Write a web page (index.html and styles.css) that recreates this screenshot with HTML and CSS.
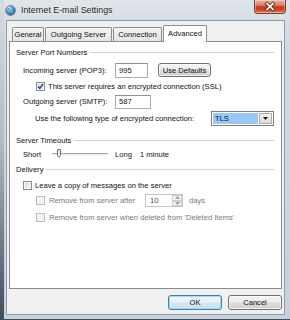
FILE: index.html
```html
<!DOCTYPE html>
<html lang="en">
<head>
<meta charset="utf-8">
<title>Internet E-mail Settings</title>
<link rel="stylesheet" href="styles.css">
</head>
<body>
<div class="window">
  <div class="titlebar">
    <svg class="appicon" width="11" height="11" viewBox="0 0 11 11">
      <defs>
        <radialGradient id="globe" cx="0.35" cy="0.3" r="0.8">
          <stop offset="0" stop-color="#e2f2ff"/>
          <stop offset="0.45" stop-color="#4f9ee0"/>
          <stop offset="1" stop-color="#1a4f8f"/>
        </radialGradient>
      </defs>
      <circle cx="5.5" cy="5.5" r="4.9" fill="url(#globe)" stroke="#6a7888" stroke-width="0.8"/>
      <path d="M2.4 3.6 q1.4 -1.2 2.6 -0.2 q0.4 1.2 -0.9 1.8 q-0.6 1 -1.6 0.3 z" fill="#63b34c"/>
      <path d="M6.4 6.1 q1.5 -0.4 2.3 0.7 q-0.4 1.6 -1.7 1.9 q-0.8 -1.2 -0.6 -2.6 z" fill="#63b34c"/>
    </svg>
    <span class="title">Internet E-mail Settings</span>
    <div class="close">
      <svg width="30" height="13" viewBox="0 0 30 13">
        <path d="M12 3.6 L18 9.4 M18 3.6 L12 9.4" stroke="#5a1e12" stroke-width="3.4" stroke-linecap="square"/>
        <path d="M12 3.6 L18 9.4 M18 3.6 L12 9.4" stroke="#ffffff" stroke-width="1.8" stroke-linecap="square"/>
      </svg>
    </div>
  </div>

  <div class="client">
    <div class="tabs">
      <div class="tab t-general">General</div>
      <div class="tab t-outgoing">Outgoing Server</div>
      <div class="tab t-connection">Connection</div>
      <div class="tab t-advanced active">Advanced</div>
    </div>

    <div class="panel">
      <div class="group g-ports"><span>Server Port Numbers</span></div>

      <div class="row r-incoming">
        <span class="lbl-port">Incoming server (POP3):</span>
        <div class="field f-in">995</div>
        <div class="btn btn-defaults">Use Defaults</div>
      </div>

      <div class="row r-ssl">
        <span class="check checked">
          <svg width="7" height="7" viewBox="0 0 7 7"><path d="M1 3.4 L2.8 5.4 L6 1" fill="none" stroke="#2d4a8a" stroke-width="1.5"/></svg>
        </span>
        <span class="ctext">This server requires an encrypted connection (SSL)</span>
      </div>

      <div class="row r-outgoing">
        <span class="lbl-port">Outgoing server (SMTP):</span>
        <div class="field f-out">587</div>
      </div>

      <div class="row r-enc">
        <span>Use the following type of encrypted connection:</span>
        <div class="select">
          <span class="sel-value">TLS</span>
          <span class="sel-btn">
            <svg width="5" height="3" viewBox="0 0 5 3"><path d="M0 0 H5 L2.5 3 Z" fill="#111"/></svg>
          </span>
        </div>
      </div>

      <div class="group g-timeouts"><span>Server Timeouts</span></div>

      <div class="row r-short">
        <span class="lbl-short">Short</span>
        <svg class="slider" width="65" height="12" viewBox="0 0 65 12">
          <line x1="2" y1="5.5" x2="58" y2="5.5" stroke="#a9a9a9" stroke-width="1"/>
          <line x1="2" y1="6.5" x2="58" y2="6.5" stroke="#e8e8e8" stroke-width="1"/>
          <path d="M7.5 1.5 H10.5 V7.5 L9 9.5 L7.5 7.5 Z" fill="#eeeeee" stroke="#707070" stroke-width="1"/>
        </svg>
        <span>Long</span>
        <span class="minute">1 minute</span>
      </div>

      <div class="group g-delivery"><span>Delivery</span></div>

      <div class="row r-leave">
        <span class="check"></span>
        <span class="ctext">Leave a copy of messages on the server</span>
      </div>

      <div class="row r-after">
        <span class="check disabled"></span>
        <span class="ctext dis lbl-after">Remove from server after</span>
        <div class="spin">
          <span class="spin-val">10</span>
          <span class="spin-btns">
            <span class="spin-b"><svg width="5" height="3" viewBox="0 0 5 3"><path d="M0 3 H5 L2.5 0 Z" fill="#a0a0a0"/></svg></span>
            <span class="spin-b"><svg width="5" height="3" viewBox="0 0 5 3"><path d="M0 0 H5 L2.5 3 Z" fill="#a0a0a0"/></svg></span>
          </span>
        </div>
        <span class="dis days">days</span>
      </div>

      <div class="row r-deleted">
        <span class="check disabled"></span>
        <span class="ctext dis">Remove from server when deleted from 'Deleted Items'</span>
      </div>
    </div>

    <div class="buttons">
      <div class="btn btn-dlg btn-ok">OK</div>
      <div class="btn btn-dlg">Cancel</div>
    </div>
  </div>
</div>
</body>
</html>
```

FILE: styles.css
```css
* { box-sizing: border-box; }

html, body {
  margin: 0;
  padding: 0;
}

body {
  width: 290px;
  height: 320px;
  overflow: hidden;
  font-family: "Liberation Sans", Arial, sans-serif;
  font-size: 7.6px;
  color: #111;
  background: #c9d1da;
}

.window {
  width: 290px;
  height: 320px;
  display: flex;
  flex-direction: column;
  background: linear-gradient(to bottom, #e0e5ea 0, #d4dae1 30px, #c8d0d9 100%);
  border-left: 4px solid #8895a3;
  border-image: linear-gradient(to bottom, #d6dce2 0, #b0bac5 45%, #3e4c5c 100%) 1;
  border-bottom: 1px solid #6d7d8e;
}

/* title bar */
.titlebar {
  height: 20px;
  flex: none;
  display: flex;
  align-items: flex-start;
}

.appicon {
  margin: 5px 0 0 1px;
  flex: none;
}

.title {
  margin: 5px 0 0 5px;
  line-height: 11px;
  font-size: 8.8px;
  color: #1b1b1b;
  text-shadow: 0 0 3px rgba(255,255,255,0.9);
}

.close {
  margin-left: auto;
  margin-right: 4px;
  width: 32px;
  height: 14px;
  border: 1px solid #7d3b2e;
  border-top: none;
  border-radius: 0 0 4px 4px;
  background: linear-gradient(to bottom, #eab2a5 0, #dc8068 40%, #c43a1d 52%, #c9492b 78%, #e08a69 100%);
  box-shadow: inset 0 0 0 1px rgba(255,255,255,0.35);
  display: flex;
  align-items: center;
  justify-content: center;
}

/* client area */
.client {
  flex: 1;
  margin: 0 5px 4px 2px;
  background: #f0f0f0;
  border: 1px solid #8f9cab;
  padding: 4px 2px 0 2px;
  display: flex;
  flex-direction: column;
}

.tabs {
  height: 16px;
  flex: none;
  display: flex;
  align-items: flex-end;
  gap: 1px;
  padding-left: 3px;
}

.tab {
  height: 14px;
  border: 1px solid #898c95;
  border-bottom: none;
  border-radius: 2px 2px 0 0;
  background: linear-gradient(to bottom, #f4f4f4, #e4e4e4);
  display: flex;
  align-items: center;
  justify-content: center;
  white-space: nowrap;
}

.tab.active {
  height: 17px;
  margin-bottom: -1px;
  background: #ffffff;
  position: relative;
  z-index: 1;
  padding-bottom: 2px;
}

.t-general { width: 32px; }
.t-outgoing { width: 67px; }
.t-connection { width: 49px; }
.t-advanced { width: 44px; }

.panel {
  height: 248px;
  flex: none;
  background: #ffffff;
  border: 1px solid #898c95;
  padding: 4px 7px 0 6px;
  display: flex;
  flex-direction: column;
}

/* group headers */
.group {
  height: 12px;
  display: flex;
  align-items: center;
  white-space: nowrap;
}

.group::after {
  content: "";
  flex: 1;
  margin-left: 3px;
  border-top: 1px solid #d2d2d2;
}

.g-timeouts { margin-top: 8px; }
.g-delivery { margin-top: 3px; }

/* rows */
.row {
  display: flex;
  align-items: center;
  white-space: nowrap;
}

.r-incoming { height: 16px; margin-top: 4px; margin-left: 7px; }
.r-ssl { height: 14px; margin-top: 1px; margin-left: 20px; }
.r-outgoing { height: 15px; margin-top: 1px; margin-left: 7px; }
.r-enc { height: 15px; margin-top: 2px; margin-left: 19px; }
.r-short { height: 12px; margin-top: 2px; margin-left: 7px; }
.r-leave { height: 12px; margin-top: 4px; margin-left: 7px; }
.r-after { height: 13px; margin-top: 3px; margin-left: 20px; }
.r-deleted { height: 12px; margin-top: 4px; margin-left: 20px; }

.lbl-port { width: 92px; flex: none; }

.field {
  background: #fff;
  border: 1px solid #abadb3;
  border-top-color: #8e9097;
  padding-left: 3px;
  display: flex;
  align-items: center;
  flex: none;
}

.f-in { width: 33px; height: 15px; }
.f-out { width: 36px; height: 14px; }

/* buttons */
.btn {
  border: 1px solid #707070;
  border-radius: 3px;
  background: linear-gradient(to bottom, #f4f4f4 0, #ebebeb 48%, #dddddd 52%, #cfcfcf 100%);
  box-shadow: inset 0 0 0 1px rgba(255,255,255,0.7);
  display: flex;
  align-items: center;
  justify-content: center;
  flex: none;
}

.btn-defaults {
  width: 53px;
  height: 14px;
  margin-left: 10px;
}

/* checkboxes */
.check {
  width: 9px;
  height: 9px;
  flex: none;
  border: 1px solid #8e8f8f;
  background: linear-gradient(135deg, #cdd1d7 0, #eef0f2 60%, #fbfbfb 100%);
  box-shadow: inset 0 0 0 1px #f4f4f4;
  display: flex;
  align-items: center;
  justify-content: center;
}

.check.checked {
  background: linear-gradient(135deg, #c9d6ea 0, #e6edf7 70%, #f7f9fc 100%);
}

.check.disabled {
  border-color: #bcbcbc;
  background: #f4f4f4;
  box-shadow: none;
}

.ctext { margin-left: 3px; }
.r-after .ctext, .r-deleted .ctext { margin-left: 4px; }

.dis { color: #7a7a7a; }

/* select */
.select {
  margin-left: auto;
  width: 63px;
  height: 15px;
  flex: none;
  border: 1px solid #7f7f7f;
  background: #fff;
  display: flex;
  padding: 1px;
}

.sel-value {
  flex: 1;
  background: #99c8f6;
  padding-left: 2px;
  display: flex;
  align-items: center;
}

.sel-btn {
  width: 13px;
  flex: none;
  margin-left: 1px;
  border: 1px solid #acacac;
  background: linear-gradient(to bottom, #f2f2f2, #dcdcdc);
  display: flex;
  align-items: center;
  justify-content: center;
}

/* slider row */
.lbl-short { width: 27px; flex: none; }
.slider { flex: none; }
.minute { margin-left: 8px; }

/* spinner */
.lbl-after { width: 96px; flex: none; }

.spin {
  width: 38px;
  height: 13px;
  flex: none;
  border: 1px solid #c2c4c8;
  background: #fff;
  display: flex;
}

.spin-val {
  flex: 1;
  padding-left: 4px;
  display: flex;
  align-items: center;
  color: #444;
}

.spin-btns {
  width: 10px;
  flex: none;
  display: flex;
  flex-direction: column;
}

.spin-b {
  flex: 1;
  border: 1px solid #d0d0d0;
  background: #f4f4f4;
  display: flex;
  align-items: center;
  justify-content: center;
}

.days { margin-left: 6px; }

/* dialog buttons */
.buttons {
  display: flex;
  justify-content: flex-end;
  gap: 6px;
  margin-top: 6px;
}

.btn-dlg {
  width: 54px;
  height: 15px;
}

.btn-ok {
  border-color: #3c7fb1;
  box-shadow: inset 0 0 0 1px #a7d9f5;
  background: linear-gradient(to bottom, #f2f8fc 0, #e6f0f8 48%, #d8e6f2 52%, #cddfee 100%);
}
```
